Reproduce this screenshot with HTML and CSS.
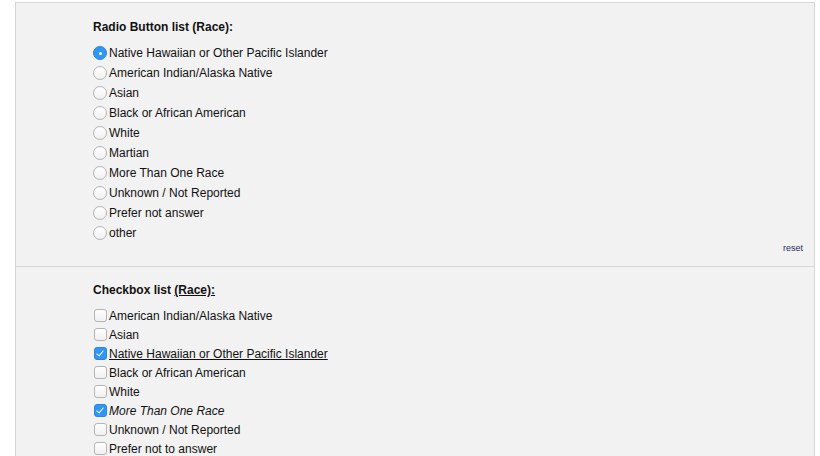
FILE: index.html
```html
<!DOCTYPE html>
<html>
<head>
    <title>Race lists</title>
    <link rel="stylesheet" href="styles.css">
</head>
<body>
    <div class="panel">
        <div class="section first">
            <div class="field-label">Radio Button list (Race):</div>
            <ul class="choice-list radios">
                <li><label><input type="radio" name="race" checked> Native Hawaiian or Other Pacific Islander</label></li>
                <li><label><input type="radio" name="race"> American Indian/Alaska Native</label></li>
                <li><label><input type="radio" name="race"> Asian</label></li>
                <li><label><input type="radio" name="race"> Black or African American</label></li>
                <li><label><input type="radio" name="race"> White</label></li>
                <li><label><input type="radio" name="race"> Martian</label></li>
                <li><label><input type="radio" name="race"> More Than One Race</label></li>
                <li><label><input type="radio" name="race"> Unknown / Not Reported</label></li>
                <li><label><input type="radio" name="race"> Prefer not answer</label></li>
                <li><label><input type="radio" name="race"> other</label></li>
            </ul>
            <div class="reset-row"><a class="reset" href="#">reset</a></div>
        </div>

        <div class="section">
            <div class="field-label">Checkbox list <u>(Race):</u></div>
            <ul class="choice-list checks">
                <li><label><input type="checkbox"> American Indian/Alaska Native</label></li>
                <li><label><input type="checkbox"> Asian</label></li>
                <li><label><input type="checkbox" checked> <u>Native Hawaiian or Other Pacific Islander</u></label></li>
                <li><label><input type="checkbox"> Black or African American</label></li>
                <li><label><input type="checkbox"> White</label></li>
                <li><label><input type="checkbox" checked> <em>More Than One Race</em></label></li>
                <li><label><input type="checkbox"> Unknown / Not Reported</label></li>
                <li><label><input type="checkbox"> Prefer not to answer</label></li>
            </ul>
        </div>
    </div>
</body>
</html>
```

FILE: styles.css
```css
body {
    margin: 0;
    font-family: "Liberation Sans", Arial, sans-serif;
    font-size: 12px;
    color: #111;
    background: #fff;
}
.panel {
    margin: 2px 0 0 15px;
    width: 800px;
    box-sizing: border-box;
    background-color: #f2f2f2;
    border: 1px solid #d6d6d6;
    border-bottom: none;
}
.section {
    padding: 15px 11px 14px 77px;
}
.section.first {
    padding-top: 16px;
    padding-bottom: 14px;
}
.section + .section {
    border-top: 1px solid #d9d9d9;
}
.field-label {
    font-weight: bold;
    line-height: 16px;
    margin-bottom: 8px;
}
.choice-list {
    list-style: none;
    margin: 0;
    padding: 0;
}
.choice-list label {
    display: flex;
    align-items: center;
    gap: 2px;
}
.radios li {
    height: 20px;
    display: flex;
    align-items: center;
}
.checks li {
    height: 19px;
    display: flex;
    align-items: center;
}
.choice-list input {
    appearance: none;
    -webkit-appearance: none;
    margin: 0;
    flex: none;
    background: linear-gradient(#ffffff, #f0f0f0);
    border: 1px solid #b4b4b4;
    box-sizing: border-box;
    position: relative;
}
.radios input {
    width: 14px;
    height: 14px;
    border-radius: 50%;
}
.checks input {
    width: 13px;
    height: 13px;
    border-radius: 3px;
    margin-left: 1px;
}
.radios input:checked {
    background: #2f95f7;
    border-color: #2a86e0;
}
.radios input:checked::after {
    content: '';
    position: absolute;
    left: 4.5px;
    top: 4.5px;
    width: 3px;
    height: 3px;
    border-radius: 50%;
    background: #fff;
}
.checks input:checked {
    background: #2f95f7;
    border-color: #2a86e0;
}
.checks input:checked::after {
    content: '';
    position: absolute;
    left: 3px;
    top: 1px;
    width: 3px;
    height: 6px;
    border: solid #fff;
    border-width: 0 1.5px 1.5px 0;
    transform: rotate(40deg);
}
.reset-row {
    text-align: right;
    line-height: 8px;
}
.reset {
    font-size: 9px;
    color: #1f2a55;
    text-decoration: none;
}
```
